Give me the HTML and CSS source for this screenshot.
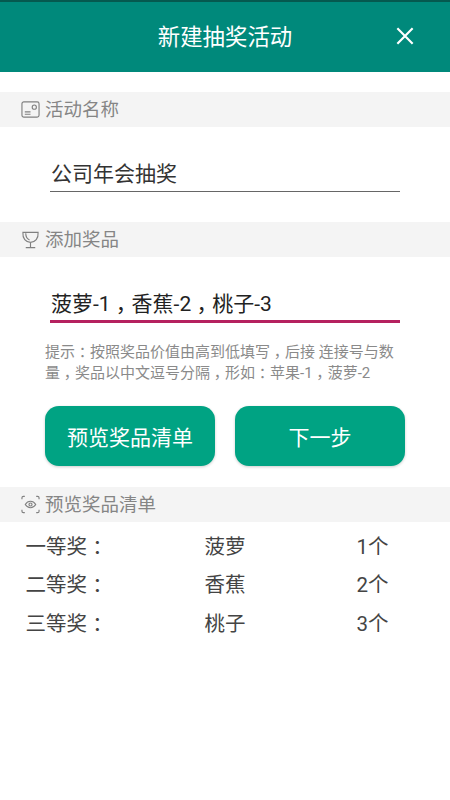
FILE: index.html
```html
<!DOCTYPE html>
<html lang="zh-CN">
<head>
<meta charset="utf-8">
<title>新建抽奖活动</title>
<link rel="stylesheet" href="styles.css">
</head>
<body>
<div class="app">
  <header class="topbar">
    <h1 class="title">新建抽奖活动</h1>
    <svg class="close" viewBox="0 0 20 20" aria-label="关闭"><path d="M1.500 1.500 18.500 18.500M18.500 1.500 1.500 18.500"/></svg>
  </header>

  <section class="sec-bar first">
    <svg class="sec-icon" viewBox="0 0 20 20"><rect x="1" y="2" width="18" height="16" rx="2"/><circle cx="14" cy="7.500" r="2.200"/><path d="M4 12.500h6M4 15h6"/></svg>
    <span>活动名称</span>
  </section>
  <div class="field"><div class="input">公司年会抽奖</div></div>

  <section class="sec-bar">
    <svg class="sec-icon" viewBox="0 0 20 20"><path d="M2 2.500h16c.5 6.500-3 10.500-8 10.500S1.500 9 2 2.500zM5 3.500c0 3.500 1.500 6 4 7M10 13v5.500M5 18.500h10"/></svg>
    <span>添加奖品</span>
  </section>
  <div class="field"><div class="input active">菠萝-1<span class="p">，</span>香蕉-2<span class="p">，</span>桃子-3</div></div>
  <p class="hint">提示<span class="p">：</span>按照奖品价值由高到低填写<span class="p">，</span>后接 连接号与数量<span class="p">，</span>奖品以中文逗号分隔<span class="p">，</span>形如<span class="p">：</span>苹果-1<span class="p">，</span>菠萝-2</p>
  <div class="actions">
    <button class="btn">预览奖品清单</button>
    <button class="btn">下一步</button>
  </div>

  <section class="sec-bar">
    <svg class="sec-icon" viewBox="0 0 20 20"><path d="M1 4.500V3a1.500 1.500 0 0 1 1.500-1.500H4M16 1.500h1.500A1.500 1.500 0 0 1 19 3v1.500M19 15.500V17a1.500 1.500 0 0 1-1.500 1.500H16M4 18.500H2.500A1.500 1.500 0 0 1 1 17v-1.500"/><path d="M4.500 10c2.800-4.500 8.200-4.500 11 0-2.800 4.500-8.200 4.500-11 0z"/><circle cx="10" cy="10" r="1.600"/></svg>
    <span>预览奖品清单</span>
  </section>
  <div class="prizes">
    <div class="prize"><span>一等奖<span class="p">：</span></span><span>菠萝</span><span>1个</span></div>
    <div class="prize"><span>二等奖<span class="p">：</span></span><span>香蕉</span><span>2个</span></div>
    <div class="prize"><span>三等奖<span class="p">：</span></span><span>桃子</span><span>3个</span></div>
  </div>
</div>
</body>
</html>
```
FILE: styles.css
```css
* { box-sizing: border-box; }
html, body { margin: 0; padding: 0; background: #fff; }
body { font-family: Roboto, "Noto Sans CJK SC", sans-serif; }
.app { width: 450px; height: 800px; overflow: hidden; background: #fff; }
.p {
  display: inline-block;
  width: 1em;
  line-height: 1;
  text-align: center;
  font-feature-settings: "halt";
}

.topbar {
  height: 72px;
  background: #00897b;
  border-top: 2px solid #05594f;
  display: flex;
  align-items: center;
  justify-content: center;
  position: relative;
}
.title { margin: 0; font-size: 22.4px; font-weight: 400; color: #fff; line-height: 1; }
.close {
  position: absolute;
  left: 396px;
  top: 25px;
  width: 18px;
  height: 18px;
  fill: none;
  stroke: #fff;
  stroke-width: 2.400;
}

.sec-bar {
  height: 34.500px;
  background: #f4f4f4;
  color: #858585;
  font-size: 18.500px;
  line-height: 36px;
  display: flex;
  align-items: flex-start;
  padding-left: 21px;
  gap: 5px;
}
.sec-bar.first { margin-top: 20px; }
.sec-icon { width: 19px; height: 19px; margin-top: 8px; fill: none; stroke: #808080; stroke-width: 1.200; flex: none; }

.field { padding: 30.500px 50px 30px; }
.input {
  height: 35px;
  padding-left: 1px;
  border-bottom: 1px solid #666;
  font-size: 21px;
  line-height: 34px;
  color: #333;
  white-space: nowrap;
}
.input.active { border-bottom: 3px solid #b5215f; color: #222; height: 36px; line-height: 34px; }

.hint {
  margin: -11px 50px 0 45px;
  width: 350px;
  font-size: 15px;
  line-height: 20.500px;
  color: #8a8a8a;
}
.actions { display: flex; gap: 20px; padding: 23px 45px 21px; }
.btn {
  flex: 1;
  height: 60px;
  border: 0;
  border-radius: 14px;
  background: #00a383;
  color: #fff;
  font-family: inherit;
  font-size: 21px;
  box-shadow: 0 1px 3px rgba(0,0,0,.2);
}
.prizes { padding: 6px 0 0 25.500px; }
.prize {
  display: grid;
  grid-template-columns: 179px 152px auto;
  height: 38.500px;
  line-height: 38px;
  font-size: 20.500px;
  color: #444;
}
```
